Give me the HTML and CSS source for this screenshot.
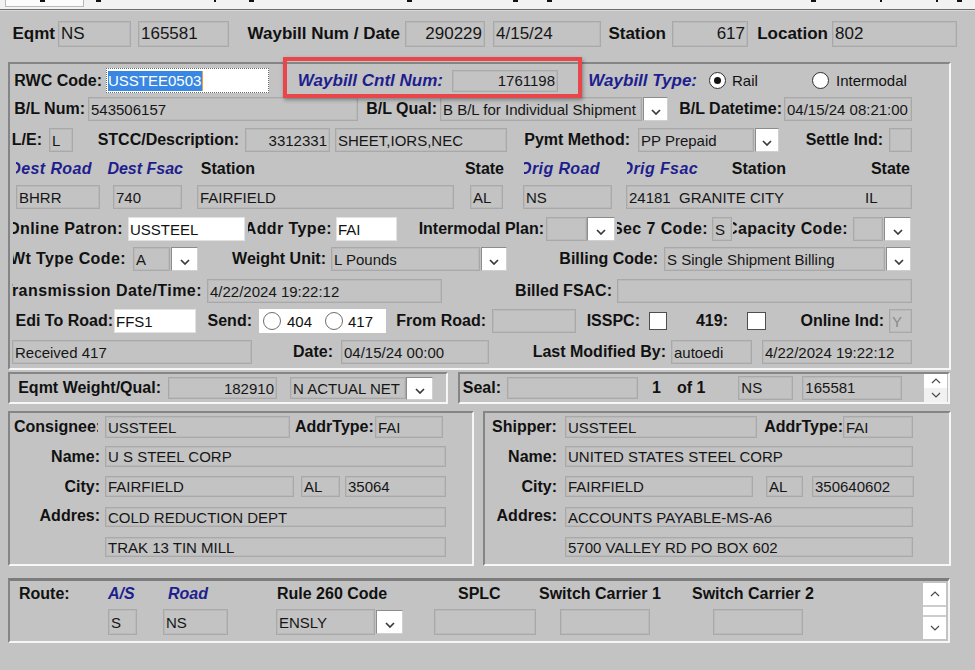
FILE: index.html
```html
<!DOCTYPE html>
<html>
<head>
<meta charset="utf-8">
<link rel="stylesheet" href="styles.css">
</head>
<body>
<div class="tabs">
  <span class="tab-first"><span class="mark mk0"></span></span>
  <span class="mark mk1"></span><span class="mark mk2"></span><span class="mark mk3"></span><span class="mark mk4"></span><span class="mark mk5"></span><span class="mark mk6"></span><span class="mark mk7"></span><span class="mark mk8"></span><span class="mark mk9"></span><span class="mark mk10"></span>
</div>

<div class="toprow">
  <span class="lb top t1">Eqmt</span>
  <span class="fld top t2">NS</span>
  <span class="fld top t3">165581</span>
  <span class="lb top t4">Waybill Num / Date</span>
  <span class="fld top rt t5">290229</span>
  <span class="fld top t6">4/15/24</span>
  <span class="lb top t7">Station</span>
  <span class="fld top rt t8">617</span>
  <span class="lb top t9">Location</span>
  <span class="fld top t10">802</span>
</div>

<div class="panel p1">
  <div class="r ra">
    <span class="lb a1">RWC Code:</span>
    <span class="inp a2"><span class="sel">USSTEE0503</span></span>
    <span class="grp a3">
      <span class="lb nv big a3l">Waybill Cntl Num:</span>
      <span class="fld rt a3f">1761198</span>
    </span>
    <span class="lb nv big a4">Waybill Type:</span>
    <span class="radio on a5"></span>
    <span class="txt a6">Rail</span>
    <span class="radio a7"></span>
    <span class="txt a8">Intermodal</span>
  </div>

  <div class="r rb">
    <span class="lb b1">B/L Num:</span>
    <span class="fld b2">543506157</span>
    <span class="lb b3">B/L Qual:</span>
    <span class="fld b4">B B/L for Individual Shipment</span>
    <span class="dd b5"><svg viewBox="0 0 10 6"><path d="M1 1 5 5 9 1"/></svg></span>
    <span class="lb b6">B/L Datetime:</span>
    <span class="fld b7">04/15/24 08:21:00</span>
  </div>

  <div class="r rc">
    <span class="lb c1">L/E:</span>
    <span class="fld c2">L</span>
    <span class="lb c3">STCC/Description:</span>
    <span class="fld rt c4">3312331</span>
    <span class="fld c5">SHEET,IORS,NEC</span>
    <span class="lb c6">Pymt Method:</span>
    <span class="fld c7">PP Prepaid</span>
    <span class="dd c8"><svg viewBox="0 0 10 6"><path d="M1 1 5 5 9 1"/></svg></span>
    <span class="lb c9">Settle Ind:</span>
    <span class="fld c10"></span>
  </div>

  <div class="r rd">
    <span class="lb nv clip d1">Dest Road</span>
    <span class="lb nv d2">Dest Fsac</span>
    <span class="lb d3">Station</span>
    <span class="lb d4">State</span>
    <span class="lb nv clip d5">Orig Road</span>
    <span class="lb nv clip d6">Orig Fsac</span>
    <span class="lb d7">Station</span>
    <span class="lb d8">State</span>
  </div>

  <div class="r re">
    <span class="fld e1">BHRR</span>
    <span class="fld e2">740</span>
    <span class="fld e3">FAIRFIELD</span>
    <span class="fld e4">AL</span>
    <span class="fld e5">NS</span>
    <span class="fld e6"><span class="e6a">24181&nbsp; GRANITE CITY</span><span class="e6b">IL</span></span>
  </div>

  <div class="r rf">
    <span class="lb clip f1">Online Patron:</span>
    <span class="inp f2">USSTEEL</span>
    <span class="lb clip f3">Addr Type:</span>
    <span class="inp f4">FAI</span>
    <span class="lb f5">Intermodal Plan:</span>
    <span class="fld f6"></span>
    <span class="dd f7"><svg viewBox="0 0 10 6"><path d="M1 1 5 5 9 1"/></svg></span>
    <span class="lb clip f8">Sec 7 Code:</span>
    <span class="fld f9">S</span>
    <span class="lb clip f10">Capacity Code:</span>
    <span class="fld f11"></span>
    <span class="dd f12"><svg viewBox="0 0 10 6"><path d="M1 1 5 5 9 1"/></svg></span>
  </div>

  <div class="r rg">
    <span class="lb clip g1">Wt Type Code:</span>
    <span class="fld g2">A</span>
    <span class="dd g3"><svg viewBox="0 0 10 6"><path d="M1 1 5 5 9 1"/></svg></span>
    <span class="lb g4">Weight Unit:</span>
    <span class="fld g5">L Pounds</span>
    <span class="dd g6"><svg viewBox="0 0 10 6"><path d="M1 1 5 5 9 1"/></svg></span>
    <span class="lb g7">Billing Code:</span>
    <span class="fld g8">S Single Shipment Billing</span>
    <span class="dd g9"><svg viewBox="0 0 10 6"><path d="M1 1 5 5 9 1"/></svg></span>
  </div>

  <div class="r rh">
    <span class="lb clip wide h1">Transmission Date/Time:</span>
    <span class="fld h2">4/22/2024 19:22:12</span>
    <span class="lb h3">Billed FSAC:</span>
    <span class="fld h4"></span>
  </div>

  <div class="r ri">
    <span class="lb i1">Edi To Road:</span>
    <span class="inp i2">FFS1</span>
    <span class="lb i3">Send:</span>
    <span class="sendbox i4">
      <span class="radio light"></span><span class="txt s404">404</span>
      <span class="radio light s417r"></span><span class="txt s417">417</span>
    </span>
    <span class="lb i5">From Road:</span>
    <span class="fld i6"></span>
    <span class="lb i7">ISSPC:</span>
    <span class="chk i8"></span>
    <span class="lb i9">419:</span>
    <span class="chk i10"></span>
    <span class="lb i11">Online Ind:</span>
    <span class="fld dim i12">Y</span>
  </div>

  <div class="r rj">
    <span class="fld j1">Received 417</span>
    <span class="lb j2">Date:</span>
    <span class="fld j3">04/15/24 00:00</span>
    <span class="lb j4">Last Modified By:</span>
    <span class="fld j5">autoedi</span>
    <span class="fld j6">4/22/2024 19:22:12</span>
  </div>
</div>

<div class="prow">
  <div class="panel p2">
    <span class="lb w1">Eqmt Weight/Qual:</span>
    <span class="fld rt w2">182910</span>
    <span class="fld w3">N ACTUAL NET</span>
    <span class="dd w4"><svg viewBox="0 0 10 6"><path d="M1 1 5 5 9 1"/></svg></span>
  </div>
  <div class="panel p3">
    <span class="lb x1">Seal:</span>
    <span class="fld x2"></span>
    <span class="lb x3">1</span>
    <span class="lb x4">of 1</span>
    <span class="fld topal x5">NS</span>
    <span class="fld topal x6">165581</span>
    <span class="spin x7">
      <span class="spin-up"><svg viewBox="0 0 10 6"><path d="M1 5 5 1 9 5"/></svg></span>
      <span class="spin-dn"><svg viewBox="0 0 10 6"><path d="M1 1 5 5 9 1"/></svg></span>
    </span>
  </div>
</div>

<div class="prow2">
  <div class="panel p4">
    <div class="cr cr1">
      <span class="lb clipr cn1">Consignee:</span>
      <span class="fld cn2">USSTEEL</span>
      <span class="lb clipr cn3">AddrType:</span>
      <span class="fld cn4">FAI</span>
    </div>
    <div class="cr cr2">
      <span class="lb clab">Name:</span>
      <span class="fld cfull">U S STEEL CORP</span>
    </div>
    <div class="cr cr3">
      <span class="lb clab">City:</span>
      <span class="fld ccity">FAIRFIELD</span>
      <span class="fld cst">AL</span>
      <span class="fld czip">35064</span>
    </div>
    <div class="cr cr4">
      <span class="lb clab addr">Addres:</span>
      <span class="fld cfull">COLD REDUCTION DEPT</span>
    </div>
    <div class="cr cr5">
      <span class="lb clab"></span>
      <span class="fld cfull">TRAK 13 TIN MILL</span>
    </div>
  </div>
  <div class="panel p5">
    <div class="cr cr1">
      <span class="lb clipr sn1">Shipper:</span>
      <span class="fld sn2">USSTEEL</span>
      <span class="lb sn3">AddrType:</span>
      <span class="fld sn4">FAI</span>
    </div>
    <div class="cr cr2">
      <span class="lb slab">Name:</span>
      <span class="fld sfull">UNITED STATES STEEL CORP</span>
    </div>
    <div class="cr cr3">
      <span class="lb slab">City:</span>
      <span class="fld scity">FAIRFIELD</span>
      <span class="fld sst">AL</span>
      <span class="fld szip">350640602</span>
    </div>
    <div class="cr cr4">
      <span class="lb slab addr">Addres:</span>
      <span class="fld sfull">ACCOUNTS PAYABLE-MS-A6</span>
    </div>
    <div class="cr cr5">
      <span class="lb slab"></span>
      <span class="fld sfull">5700 VALLEY RD PO BOX 602</span>
    </div>
  </div>
</div>

<div class="panel p6">
  <div class="route-left">
    <div class="rh-row">
      <span class="lb hl rh1">Route:</span>
      <span class="lb hl nv rh2">A/S</span>
      <span class="lb hl nv rh3">Road</span>
      <span class="lb hl rh4">Rule 260 Code</span>
      <span class="lb hl rh5">SPLC</span>
      <span class="lb hl rh6">Switch Carrier 1</span>
      <span class="lb hl rh7">Switch Carrier 2</span>
    </div>
    <div class="rf-row">
      <span class="fld rf1">S</span>
      <span class="fld rf2">NS</span>
      <span class="fld rf3">ENSLY</span>
      <span class="dd rf4"><svg viewBox="0 0 10 6"><path d="M1 1 5 5 9 1"/></svg></span>
      <span class="fld rf5"></span>
      <span class="fld rf6"></span>
      <span class="fld rf7"></span>
    </div>
  </div>
  <div class="vscroll">
    <span class="vs-btn"><svg viewBox="0 0 10 6"><path d="M1 5 5 1 9 5"/></svg></span>
    <span class="vs-thumb"></span>
    <span class="vs-btn"><svg viewBox="0 0 10 6"><path d="M1 1 5 5 9 1"/></svg></span>
  </div>
</div>
</body>
</html>
```

FILE: styles.css
```css
* { box-sizing: border-box; }
html, body { margin: 0; padding: 0; }
body {
  width: 975px; height: 670px; overflow: hidden;
  background: #c3c3c3;
  font-family: "Liberation Sans", Arial, sans-serif;
  color: #111;
}

/* tab strip */
.tabs {
  height: 10px; background: #f2f2f2;
  border-bottom: 1px solid #6c6c6c;
  box-shadow: 0 1px 0 #d9d9d9;
  display: flex; align-items: flex-start;
}
.tab-first {
  display: flex; margin-left: 5px; width: 79px; height: 7px;
  background: #fbfbfb; border: 1px solid #b9b9b9; border-top: 0;
}
.mark { flex: none; width: 5px; height: 2px; background: #111; }
.mk0 { margin-left: 34px; }
.mk1 { margin-left: 12px; }
.mk2 { margin-left: 113px; width: 2px; }
.mk3 { margin-left: 33px; }
.mk4 { margin-left: 153px; }
.mk5 { margin-left: 101px; }
.mk6 { margin-left: 29px; }
.mk7 { margin-left: 259px; }
.mk8 { margin-left: 64px; width: 2px; }
.mk9 { margin-left: 54px; width: 2px; }
.mk10 { margin-left: 19px; }

/* generic pieces */
.lb {
  flex: none; height: 100%;
  display: flex; align-items: center; justify-content: flex-end;
  white-space: nowrap; font-weight: bold; font-size: 16px; color: #111;
}
.nv { color: #1e1e8e; font-style: italic; }
.big { font-size: 17px; }
.clip { overflow: hidden; letter-spacing: .4px; }
.wide { letter-spacing: .45px; }
.clipr { overflow: hidden; justify-content: flex-start; }
.hl { justify-content: flex-start; }

.fld {
  flex: none; height: 100%;
  display: flex; align-items: center;
  padding: 0 2px;
  border: 1px solid #a9a9a9;
  box-shadow: inset 0 0 0 1px #bababa;
  white-space: nowrap; overflow: hidden;
  font-size: 15px; color: #161616;
}
.rt { justify-content: flex-end; }
.topal { align-items: flex-start; padding-top: 2px; }
.dim { color: #8a8a8a; }
.txt { flex: none; font-size: 15px; white-space: nowrap; color: #111; }

.inp {
  flex: none; height: 100%;
  display: flex; align-items: center;
  padding: 0 1px; background: #fff;
  border: 1px solid #e2e2e2;
  white-space: nowrap; overflow: hidden;
  font-size: 15px; color: #111;
}

.dd {
  flex: none; height: 100%;
  display: flex; align-items: flex-end; justify-content: center;
  padding-bottom: 5px;
  background: #fff;
  border: 1px solid #8c8c8c; border-right-color: #d0d0d0; border-bottom-color: #d0d0d0;
}
.dd svg, .spin svg, .vs-btn svg { width: 10px; height: 6px; display: block; }
.dd path { fill: none; stroke: #3a3a3a; stroke-width: 1.7; }

.radio {
  flex: none; width: 17px; height: 17px; border-radius: 50%;
  background: #fff; border: 1px solid #2e2e2e;
  display: flex; align-items: center; justify-content: center;
}
.radio.on::after { content: ""; width: 7px; height: 7px; border-radius: 50%; background: #111; }
.radio.light { border-color: #6e6e6e; width: 18px; height: 18px; }

.chk { flex: none; width: 18px; height: 18px; background: #fff; border: 1px solid #4e4e4e; }

.panel {
  border: 2px solid;
  border-color: #858585 #f6f6f6 #f6f6f6 #858585;
}

/* top row */
.toprow { display: flex; align-items: center; height: 26px; margin-top: 11px; }
.top { font-size: 17px; }
.t1 { margin-left: 11px; width: 44px; }
.t2 { margin-left: 3px; width: 73px; }
.t3 { margin-left: 7px; width: 91px; }
.t4 { margin-left: 15px; width: 156px; }
.t5 { margin-left: 5px; width: 80px; }
.t6 { margin-left: 8px; width: 108px; }
.t7 { margin-left: 8px; width: 57px; }
.t8 { margin-left: 6px; width: 76px; }
.t9 { margin-left: 7px; width: 73px; }
.t10 { margin-left: 4px; width: 125px; }

/* main panel */
.p1 { margin: 15px 0 0 8px; width: 943px; height: 308px; }
.r { display: flex; align-items: center; height: 24px; }
.ra { margin-top: 4px; height: 25px; }
.rb { margin-top: 4px; }
.rc { margin-top: 7px; }
.rd { margin-top: 7px; height: 20px; }
.re { margin-top: 6px; }
.rf { margin-top: 8px; }
.rg { margin-top: 6px; }
.rh { margin-top: 8px; }
.ri { margin-top: 6px; }
.rj { margin-top: 7px; }

.a1 { margin-left: 4px; width: 88px; }
.a2 { margin-left: 4px; width: 163px; border: 1px dotted #6a6a6a; }
.sel {
  background: #3987e2; color: #fff; height: 20px;
  display: flex; align-items: center; padding-right: 1px;
  border-right: 1px solid #e8a04a;
}
.grp { flex: none; position: relative; display: flex; align-items: center; height: 100%; margin-left: 23px; }
.grp::after {
  content: ""; position: absolute;
  left: -9px; right: -24px; top: -11px; bottom: -5px;
  border: 4px solid #e8464a;
  box-shadow: 1px 2px 4px rgba(0,0,0,.35);
  pointer-events: none;
}
.a3l { width: 151px; }
.a3f { margin-left: 9px; width: 106px; height: 22px; }
.a4 { margin-left: 28px; width: 111px; }
.a5 { margin-left: 12px; }
.a6 { margin-left: 6px; width: 25px; }
.a7 { margin-left: 55px; }
.a8 { margin-left: 7px; }

.b1 { margin-left: 4px; width: 71px; }
.b2 { margin-left: 3px; width: 270px; }
.b3 { margin-left: 7px; width: 72px; }
.b4 { margin-left: 3px; width: 202px; }
.b5 { margin-left: 1px; width: 25px; }
.b6 { margin-left: 7px; width: 107px; }
.b7 { margin-left: 2px; width: 128px; }

.c1 { margin-left: 4px; width: 28px; }
.c2 { margin-left: 7px; width: 24px; }
.c3 { margin-left: 20px; width: 146px; }
.c4 { margin-left: 6px; width: 85px; }
.c5 { margin-left: 5px; width: 172px; }
.c6 { margin-left: 12px; width: 111px; }
.c7 { margin-left: 8px; width: 116px; }
.c8 { margin-left: 1px; width: 24px; }
.c9 { margin-left: 24px; width: 80px; }
.c10 { margin-left: 6px; width: 23px; }

.d1 { margin-left: 6px; width: 76px; }
.d2 { margin-left: 18px; width: 73px; }
.d3 { margin-left: 19px; width: 53px; }
.d4 { margin-left: 211px; width: 38px; }
.d5 { margin-left: 20px; width: 76px; }
.d6 { margin-left: 27px; width: 71px; }
.d7 { margin-left: 34px; width: 54px; }
.d8 { margin-left: 85px; width: 39px; }

.e1 { margin-left: 6px; width: 84px; }
.e2 { margin-left: 13px; width: 69px; }
.e3 { margin-left: 15px; width: 257px; }
.e4 { margin-left: 16px; width: 33px; }
.e5 { margin-left: 20px; width: 89px; }
.e6 { margin-left: 14px; width: 286px; }
.e6a { flex: 1; }
.e6b { flex: none; width: 44px; }

.f1 { margin-left: 3px; width: 110px; }
.f2 { margin-left: 5px; width: 117px; }
.f3 { margin-left: 3px; width: 84px; }
.f4 { margin-left: 4px; width: 61px; }
.f5 { margin-left: 14px; width: 133px; }
.f6 { margin-left: 2px; width: 41px; }
.f7 { margin-left: 0; width: 28px; }
.f8 { margin-left: 2px; width: 91px; }
.f9 { margin-left: 4px; width: 20px; }
.f10 { margin-left: 1px; width: 115px; }
.f11 { margin-left: 5px; width: 30px; }
.f12 { margin-left: 1px; width: 27px; }

.g1 { margin-left: 3px; width: 113px; }
.g2 { margin-left: 7px; width: 37px; }
.g3 { margin-left: 1px; width: 27px; }
.g4 { margin-left: 32px; width: 96px; }
.g5 { margin-left: 5px; width: 149px; }
.g6 { margin-left: 1px; width: 26px; }
.g7 { margin-left: 51px; width: 100px; }
.g8 { margin-left: 6px; width: 221px; }
.g9 { margin-left: 1px; width: 25px; }

.h1 { margin-left: 2px; width: 190px; }
.h2 { margin-left: 5px; width: 235px; }
.h3 { margin-left: 74px; width: 96px; }
.h4 { margin-left: 5px; width: 295px; }

.i1 { margin-left: 7px; width: 96px; }
.i2 { margin-left: 1px; width: 82px; }
.i3 { margin-left: 13px; width: 43px; }
.sendbox {
  flex: none; height: 100%; background: #fff;
  display: flex; align-items: center; padding-left: 4px;
}
.i4 { margin-left: 7px; width: 127px; }
.s404 { margin-left: 6px; }
.s417r { margin-left: 13px; }
.s417 { margin-left: 5px; }
.i5 { margin-left: 10px; width: 90px; }
.i6 { margin-left: 6px; width: 84px; }
.i7 { margin-left: 12px; width: 52px; }
.i8 { margin-left: 9px; }
.i9 { margin-left: 31px; width: 30px; }
.i10 { margin-left: 19px; width: 19px; }
.i11 { margin-left: 32px; width: 86px; }
.i12 { margin-left: 5px; width: 23px; }

.j1 { margin-left: 2px; width: 240px; }
.j2 { margin-left: 42px; width: 39px; }
.j3 { margin-left: 8px; width: 148px; }
.j4 { margin-left: 38px; width: 139px; }
.j5 { margin-left: 5px; width: 81px; }
.j6 { margin-left: 10px; width: 150px; }

/* weight / seal */
.prow { display: flex; margin-top: 2px; }
.p2, .p3 { height: 32px; display: flex; align-items: center; }
.p2 { margin-left: 8px; width: 440px; }
.p3 { margin-left: 10px; width: 492px; }
.p2 .fld, .p3 .fld { height: 22px; }
.w1 { margin-left: 4px; width: 147px; }
.w2 { margin-left: 7px; width: 109px; }
.w3 { margin-left: 13px; width: 116px; }
.w4 { width: 27px; height: 23px; }
.x1 { margin-left: 3px; width: 38px; }
.x2 { margin-left: 6px; width: 131px; }
.x3 { margin-left: 14px; }
.x4 { margin-left: 16px; }
.p3 .x5 { margin-left: 33px; width: 55px; height: 24px; }
.p3 .x6 { margin-left: 9px; width: 100px; height: 24px; }
.spin {
  flex: none; width: 23px; height: 100%;
  display: flex; flex-direction: column; background: #fff;
}
.x7 { margin-left: 22px; }
.spin-up, .spin-dn { flex: 1; display: flex; align-items: center; justify-content: center; }
.spin-dn { background: #f1f1f1; }
.spin path, .vs-btn path { fill: none; stroke: #4a4a4a; stroke-width: 1.2; }

/* consignee / shipper */
.prow2 { display: flex; margin-top: 7px; }
.p4, .p5 { height: 155px; }
.p4 { margin-left: 8px; width: 466px; }
.p5 { margin-left: 9px; width: 468px; }
.cr { display: flex; align-items: center; }
.cr1 { margin-top: 3px; height: 22px; }
.cr2 { margin-top: 8px; height: 21px; }
.cr3 { margin-top: 9px; height: 21px; }
.cr4 { margin-top: 10px; height: 20px; }
.cr5 { margin-top: 10px; height: 20px; }
.addr { align-items: flex-start; }

.cn1 { margin-left: 4px; width: 84px; }
.cn2 { margin-left: 7px; width: 185px; }
.cn3 { margin-left: 5px; width: 79px; }
.cn4 { margin-left: 1px; width: 68px; }
.clab { width: 90px; }
.cfull { margin-left: 5px; width: 341px; }
.ccity { margin-left: 5px; width: 189px; }
.cst { margin-left: 7px; width: 39px; }
.czip { margin-left: 5px; width: 101px; }

.sn1 { margin-left: 7px; width: 64px; }
.sn2 { margin-left: 9px; width: 192px; }
.sn3 { margin-left: 5px; width: 81px; }
.sn4 { width: 70px; }
.slab { width: 72px; }
.sfull { margin-left: 8px; width: 348px; }
.scity { margin-left: 8px; width: 188px; }
.sst { margin-left: 13px; width: 37px; }
.szip { margin-left: 9px; width: 102px; }

/* route */
.p6 {
  margin: 12px 0 0 8px; width: 942px; height: 65px;
  border-top: 3px solid #7c7c7c;
  display: flex;
}
.route-left { flex: none; width: 913px; }
.rh-row { display: flex; align-items: center; height: 22px; margin-top: 2px; }
.rf-row { display: flex; align-items: center; height: 26px; margin-top: 4px; }
.rh1 { margin-left: 9px; width: 53px; }
.rh2 { margin-left: 36px; width: 29px; }
.rh3 { margin-left: 31px; width: 43px; }
.rh4 { margin-left: 66px; width: 113px; }
.rh5 { margin-left: 68px; width: 40px; }
.rh6 { margin-left: 41px; width: 128px; }
.rh7 { margin-left: 25px; width: 129px; }
.rf1 { margin-left: 98px; width: 29px; }
.rf2 { margin-left: 26px; width: 65px; }
.rf3 { margin-left: 48px; width: 99px; }
.rf4 { margin-left: 1px; width: 27px; height: 24px; }
.rf5 { margin-left: 31px; width: 102px; }
.rf6 { margin-left: 24px; width: 90px; }
.rf7 { margin-left: 63px; width: 90px; }

.vscroll {
  flex: none; width: 23px; height: 56px;
  margin-top: 2px;
  display: flex; flex-direction: column; gap: 2px;
  background: #cdcdcd;
}
.vs-btn {
  flex: none; height: 22px; background: #fff;
  display: flex; align-items: center; justify-content: center;
}
.vs-thumb { flex: none; height: 8px; background: #fff; }
```
